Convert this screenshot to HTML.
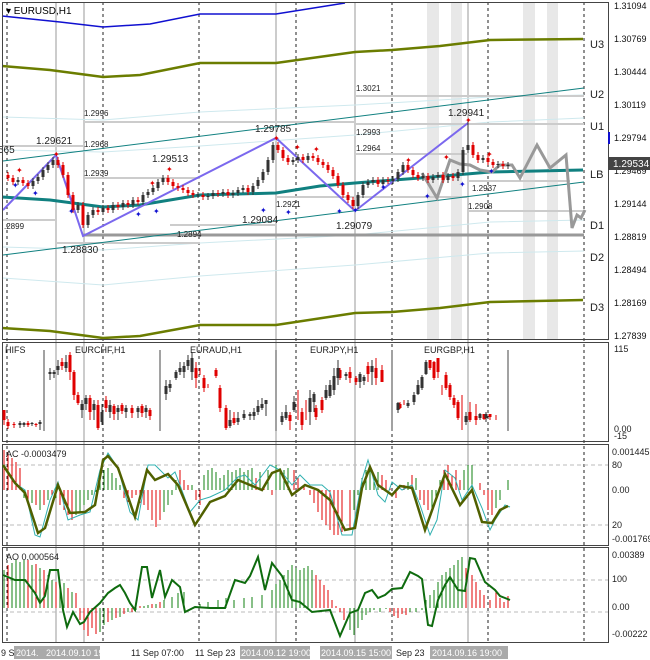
<!DOCTYPE html>
<html><head><meta charset="utf-8"><style>
html,body{margin:0;padding:0;background:#fff;width:650px;height:660px;overflow:hidden}
svg{display:block;font-family:"Liberation Sans",sans-serif}
</style></head><body>
<svg width="650" height="660" xmlns="http://www.w3.org/2000/svg">
<rect width="650" height="660" fill="#fff"/>
<g fill="#e8e8e8">
<rect x="427" y="2" width="12" height="338"/><rect x="451" y="2" width="11" height="338"/>
<rect x="523" y="2" width="12" height="338"/><rect x="547" y="2" width="11" height="338"/>
</g>
<g stroke="#999" stroke-width="1">
<line x1="56" y1="2" x2="56" y2="642"/><line x1="84" y1="2" x2="84" y2="642"/>
<line x1="276" y1="2" x2="276" y2="642"/><line x1="355" y1="2" x2="355" y2="642"/>
<line x1="468" y1="2" x2="468" y2="642"/>
</g>
<g stroke="#222" stroke-width="1" stroke-dasharray="3,3">
<line x1="7" y1="2" x2="7" y2="642"/><line x1="103" y1="2" x2="103" y2="642"/>
<line x1="199" y1="2" x2="199" y2="642"/><line x1="296" y1="2" x2="296" y2="642"/>
<line x1="392" y1="2" x2="392" y2="642"/><line x1="488" y1="2" x2="488" y2="642"/>
<line x1="584" y1="2" x2="584" y2="642"/>
</g>
<g fill="none" stroke="#cfe9ee" stroke-width="1">
<polyline points="3,117 103,120 200,112 355,105 490,97 584,95"/>
<polyline points="3,150 103,152 200,146 355,135 490,122 584,118"/>
<polyline points="3,247 103,250 200,243 355,235 490,222 584,220"/>
<polyline points="3,278 103,285 200,276 355,265 490,253 584,251"/>
</g>
<g stroke="#ccc" stroke-width="2">
<line x1="84" y1="122" x2="355" y2="122"/><line x1="2" y1="146" x2="84" y2="146"/>
<line x1="84" y1="178" x2="200" y2="178"/><line x1="2" y1="220" x2="56" y2="220"/>
<line x1="355" y1="96" x2="584" y2="96"/><line x1="355" y1="124" x2="584" y2="124"/>
<line x1="355" y1="154" x2="468" y2="154"/><line x1="276" y1="197" x2="468" y2="197"/>
<line x1="468" y1="181" x2="570" y2="181"/><line x1="468" y1="211" x2="584" y2="211"/>
<line x1="56" y1="243" x2="200" y2="243"/><line x1="170" y1="225" x2="276" y2="225"/>
</g>
<line x1="84" y1="235" x2="584" y2="235" stroke="#999" stroke-width="3"/>
<polyline fill="none" stroke="#1010d0" stroke-width="1.5" points="2,16 60,22 103,27 150,24 200,14 276,14 345,3"/>
<g fill="none" stroke="#6b7d00" stroke-width="2.5">
<polyline points="2,66 50,70 103,77 140,75 200,63 276,63 355,52 392,50 440,46 490,40 583,39"/>
<polyline points="2,328 50,331 103,338 140,336 200,325 276,325 355,313 392,312 440,308 490,302 583,300"/>
</g>
<g fill="none" stroke="#108080" stroke-width="1">
<line x1="3" y1="161" x2="584" y2="88"/><line x1="3" y1="255" x2="584" y2="182"/>
</g>
<polyline fill="none" stroke="#108080" stroke-width="3" points="2,197 50,200 103,207 140,205 200,195 276,193 320,186 355,183 420,178 490,172 583,170"/>
<polyline fill="none" stroke="#7b68ee" stroke-width="2" points="3,210 56,155 83,236 276,138 355,211 410,168 468,123"/>
<polyline fill="none" stroke="#999" stroke-width="3" points="422,173 437,198 450,160 460,164 470,165 480,170 492,172 500,165 512,165 520,178 537,145 550,168 566,155 572,228 577,215 581,218 585,210"/>
<!-- main candles: red -->
<path fill="none" stroke="#e00000" stroke-width="1" d="M8 172V181M13 175V185M23 177V186M28 180V189M58 157V168M63 162V178M68 172V198M73 192V213M83 202V228M98 207V215M108 205V213M118 202V210M128 200V208M138 197V205M168 175V185M173 179V189M178 183V191M183 185V193M188 187V196M193 190V198M203 192V200M218 190V197M228 189V198M248 185V195M278 142V153M283 147V161M288 155V165M303 154V163M313 153V161M318 155V165M323 159V168M328 162V173M333 167V179M338 173V188M343 182V198M348 192V203M353 197V209M378 177V187M388 177V184M408 162V173M413 167V178M418 172V181M428 173V183M443 172V183M453 173V181M473 142V158M478 152V163M488 155V165M493 159V168M503 161V169"/>
<path fill="none" stroke="#e00000" stroke-width="3" d="M8 175V178M13 178V182M23 180V183M28 183V186M58 160V165M63 165V175M68 175V195M73 195V210M83 205V225M98 210V212M108 208V210M118 205V207M128 203V205M138 200V202M168 178V182M173 182V186M178 186V188M183 188V190M188 190V193M193 193V195M203 195V197M218 193V194M228 192V195M248 188V192M278 145V150M283 150V158M288 158V162M303 157V160M313 156V158M318 158V162M323 162V165M328 165V170M333 170V176M338 176V185M343 185V195M348 195V200M353 200V206M378 180V184M388 180V181M408 165V170M413 170V175M418 175V178M428 176V180M443 175V180M453 176V178M473 145V155M478 155V160M488 158V162M493 162V165M503 164V166"/>
<!-- main candles: dark -->
<path fill="none" stroke="#333" stroke-width="1" d="M18 177V185M33 178V189M38 174V184M43 167V180M48 162V173M53 157V168M78 202V213M88 212V228M93 207V218M103 205V215M113 202V213M123 200V210M133 197V208M143 192V205M148 189V198M153 185V195M158 179V191M163 175V185M198 192V198M208 193V200M213 190V199M223 189V197M233 190V198M238 187V196M243 185V193M253 183V195M258 177V189M263 169V183M268 157V175M273 142V163M293 157V165M298 154V163M308 153V163M358 192V209M363 182V198M368 179V188M373 177V185M383 177V187M393 176V184M398 169V182M403 162V175M423 173V181M433 174V183M438 172V180M448 173V183M458 169V181M463 147V175M468 120V153M483 155V163M498 161V168M508 162V169"/>
<path fill="none" stroke="#333" stroke-width="3" d="M18 180V182M33 181V186M38 177V181M43 170V177M48 165V170M53 160V165M78 205V210M88 215V225M93 210V215M103 208V212M113 205V210M123 203V207M133 200V205M143 195V202M148 192V195M153 188V192M158 182V188M163 178V182M198 194.5V195.5M208 196V197M213 193V196M223 192V194M233 193V195M238 190V193M243 188V190M253 186V192M258 180V186M263 172V180M268 160V172M273 145V160M293 160V162M298 157V160M308 156V160M358 195V206M363 185V195M368 182V185M373 180V182M383 180V184M393 179V181M398 172V179M403 165V172M423 176V178M433 177V180M438 175V177M448 176V180M458 172V178M463 150V172M468 145V150M483 158V160M498 164V165M508 165V166"/>
<!-- fractal markers -->
<g fill="#e00000" font-size="8"><text x="16" y="173">✦</text><text x="53" y="157">✦</text><text x="149" y="186">✦</text><text x="166" y="172">✦</text><text x="273" y="141">✦</text><text x="294" y="150">✦</text><text x="313" y="152">✦</text><text x="405" y="163">✦</text><text x="443" y="160">✦</text><text x="465" y="123">✦</text><text x="486" y="157">✦</text></g>
<g fill="#1010d0" font-size="8"><text x="12" y="188">✦</text><text x="32" y="196">✦</text><text x="68" y="214">✦</text><text x="135" y="217">✦</text><text x="153" y="214">✦</text><text x="260" y="213">✦</text><text x="285" y="215">✦</text><text x="336" y="214">✦</text><text x="352" y="213">✦</text><text x="380" y="190">✦</text><text x="424" y="199">✦</text><text x="459" y="187">✦</text><text x="488" y="174">✦</text></g>
<g font-size="10" fill="#222">
<text x="-2" y="153">565</text><text x="36" y="144">1.29621</text>
<text x="152" y="162">1.29513</text><text x="255" y="132">1.29785</text>
<text x="448" y="116">1.29941</text><text x="62" y="253">1.28830</text>
<text x="242" y="223">1.29084</text><text x="336" y="229">1.29079</text>
</g>
<g font-size="8" fill="#222">
<text x="84" y="116">1.2996</text><text x="84" y="147">1.2968</text><text x="84" y="176">1.2939</text>
<text x="4" y="229">.2899</text><text x="356" y="91">1.3021</text><text x="356" y="135">1.2993</text>
<text x="356" y="151">1.2964</text><text x="276" y="207">1.2921</text><text x="472" y="191">1.2937</text>
<text x="468" y="209">1.2908</text><text x="177" y="237">1.2894</text>
</g>
<g font-size="11" fill="#222">
<text x="590" y="48">U3</text><text x="590" y="98">U2</text><text x="590" y="130">U1</text>
<text x="590" y="178">LB</text><text x="590" y="229">D1</text><text x="590" y="261">D2</text><text x="590" y="311">D3</text>
</g>
<text x="6" y="14" font-size="10" fill="#000">▾ EURUSD,H1</text>
<g fill="none" stroke="#444" stroke-width="1">
<rect x="2.5" y="2.5" width="606" height="337"/>
<rect x="2.5" y="342.5" width="606" height="99"/>
<rect x="2.5" y="444.5" width="606" height="101"/>
<rect x="2.5" y="547.5" width="606" height="95"/>
</g>
<g font-size="9" fill="#111">
<text x="614" y="9">1.31094</text><text x="614" y="42">1.30769</text><text x="614" y="75">1.30444</text>
<text x="614" y="108">1.30119</text><text x="614" y="141">1.29794</text><text x="614" y="174">1.29469</text>
<text x="614" y="207">1.29144</text><text x="614" y="240">1.28819</text><text x="614" y="273">1.28494</text>
<text x="614" y="306">1.28169</text><text x="614" y="339">1.27839</text>
</g>
<rect x="608" y="132" width="2" height="12" fill="#1010d0"/>
<rect x="609" y="157" width="41" height="13" fill="#444"/>
<text x="613" y="167" font-size="10" fill="#fff">1.29534</text>
<!-- subpanel 1 -->
<g font-size="9" fill="#222">
<text x="5" y="353">HIFS</text><text x="75" y="353">EURCHF,H1</text><text x="190" y="353">EURAUD,H1</text>
<text x="310" y="353">EURJPY,H1</text><text x="424" y="353">EURGBP,H1</text>
<text x="614" y="352">115</text><text x="614" y="432">0.00</text><text x="614" y="439">-15</text>
</g>
<g stroke="#444"><line x1="44" y1="350" x2="44" y2="431"/><line x1="160" y1="350" x2="160" y2="431"/><line x1="276" y1="350" x2="276" y2="431"/><line x1="392" y1="350" x2="392" y2="431"/><line x1="508" y1="350" x2="508" y2="431"/></g>
<path fill="none" stroke="#e00000" stroke-width="1" d="M4 410V425M8 419V429M14 422V428M28 421V427M36 423V427M62 358V370M70 352V380M74 370V400M78 392V405M90 395V420M98 400V430M106 396V412M114 404V420M122 403V414M132 405V418M142 404V417M150 408V420M196 362V388M200 368V375M204 375V392M208 384V388M216 368V378M220 385V412M226 405V430M234 412V425M290 412V430M298 390V420M302 408V430M306 400V420M316 405V420M322 397V413M340 368V380M350 367V383M356 376V385M368 362V382M376 358V385M382 365V382M400 402V409M404 400V405M430 360V370M434 361V380M438 358V378M442 385V395M446 372V390M450 383V400M454 395V408M458 400V420M462 395V430M470 402V422M476 404V425M484 414V420M490 414V420M496 415V420"/>
<path fill="none" stroke="#e00000" stroke-width="3" d="M4 410V420M8 422V426M14 424V425M28 423V425M36 424V425M62 362V366M70 355V372M74 372V395M78 395V403M90 398V412M98 405V428M106 400V408M114 406V414M122 405V411M132 408V413M142 406V413M150 410V416M196 368V378M204 378V388M216 370V376M220 388V408M226 408V428M234 418V423M290 415V421M302 412V425M316 408V417M322 400V410M340 370V378M350 372V378M356 378V382M368 366V374M376 368V378M382 370V382M400 404V408M430 360V368M434 362V378M438 358V372M446 375V388M450 385V397M454 398V405M458 402V418M470 412V420M476 416V420M484 414V419M490 414V417"/>
<path fill="none" stroke="#333" stroke-width="1" d="M20 421V428M24 422V427M32 422V426M40 420V430M50 368V380M54 370V378M58 360V375M66 355V372M82 400V418M86 395V410M94 400V420M102 404V425M110 400V418M118 405V420M126 405V418M138 406V418M146 405V418M166 380V400M170 380V392M176 370V380M180 362V375M184 362V378M188 355V370M192 352V380M230 410V428M238 412V425M244 410V420M250 412V420M254 408V420M258 400V415M262 398V410M266 400V416M282 412V425M286 405V420M294 396V412M310 390V425M314 392V412M326 385V400M330 380V398M334 368V395M338 360V385M346 372V380M360 372V388M364 375V385M372 360V385M398 402V413M408 400V408M414 392V405M418 380V395M422 375V390M426 360V375M466 412V425M480 413V420M486 412V422"/>
<path fill="none" stroke="#333" stroke-width="3" d="M20 423V425M24 423V425M32 423V424M40 422V424M50 372V374M54 372V374M58 366V370M66 362V368M82 404V410M86 398V404M94 404V410M102 412V422M110 405V412M118 408V412M126 408V412M138 408V412M146 408V412M166 386V394M170 384V388M176 372V378M180 368V372M184 366V372M188 360V366M192 358V372M230 420V426M238 418V422M244 414V418M250 414V416M254 412V416M258 406V412M262 404V408M266 400V404M282 416V422M286 412V418M294 402V410M310 398V412M314 394V402M326 390V398M330 385V396M334 376V390M338 368V378M346 374V376M360 374V382M364 377V381M372 366V372M398 403V410M408 403V406M414 395V402M418 385V394M422 377V388M426 362V374M466 416V422M480 414V418M486 414V418"/>
<!-- AC -->
<g stroke="#bbb" stroke-dasharray="4,3"><line x1="3" y1="465" x2="608" y2="465"/><line x1="3" y1="525" x2="608" y2="525"/><line x1="3" y1="580" x2="608" y2="580"/><line x1="3" y1="612" x2="608" y2="612"/></g>
<path fill="none" stroke="#e00000" stroke-width="1" d="M4 490V450M8 490V452M12 490V458M16 490V462M20 490V468M28 490V500M36 490V505M44 490V505M52 490V495M60 490V505M64 490V510M68 490V515M72 490V520M124 490V498M128 490V502M132 490V498M136 490V495M140 490V503M144 490V505M148 490V510M152 490V520M156 490V527M160 490V520M180 490V470M184 490V480M188 490V485M196 490V500M200 490V505M256 490V478M264 490V485M272 490V495M294 490V470M298 490V478M304 490V485M310 490V495M314 490V503M318 490V512M322 490V520M326 490V525M330 490V530M334 490V535M338 490V535M342 490V532M350 490V528M382 490V475M386 490V480M390 490V488M396 490V498M404 490V485M412 490V475M420 490V500M424 490V505M428 490V510M444 490V470M448 490V465M452 490V475M456 490V470M460 490V480M480 490V483M484 490V495M488 490V510M492 490V515"/>
<path fill="none" stroke="#108010" stroke-width="1" d="M24 490V498M32 490V503M40 490V510M48 490V500M56 490V498M76 490V515M80 490V512M84 490V505M88 490V500M92 490V495M96 490V492M100 490V480M104 490V470M108 490V468M112 490V473M116 490V478M120 490V485M164 490V512M168 490V505M172 490V495M176 490V480M192 490V485M204 490V475M208 490V470M212 490V468M216 490V472M220 490V478M224 490V475M228 490V470M232 490V472M236 490V470M240 490V468M244 490V472M248 490V470M252 490V468M260 490V472M268 490V470M276 490V465M280 490V468M284 490V470M288 490V468M354 490V510M358 490V495M362 490V478M366 490V470M370 490V468M374 490V474M378 490V472M400 490V490M408 490V482M416 490V478M432 490V510M436 490V498M440 490V480M464 490V470M468 490V465M472 490V465M496 490V508M500 490V500M504 490V490M508 490V480"/>
<polyline fill="none" stroke="#30b0b0" stroke-width="1" points="3,465 15,483 25,490 35,535 40,537 50,500 58,482 68,520 80,515 90,512 100,470 108,453 118,468 130,512 138,520 148,465 155,465 168,478 175,472 190,512 200,500 210,497 225,490 238,477 245,475 255,485 270,465 280,470 292,485 300,475 310,485 322,485 330,492 342,535 352,535 362,480 368,460 378,495 385,502 392,482 402,490 412,485 420,505 430,535 437,520 445,470 455,478 462,500 472,485 482,508 490,530 495,520 505,505 510,507"/>
<polyline fill="none" stroke="#506000" stroke-width="2.5" points="3,465 15,483 25,493 38,533 45,528 58,485 70,513 85,512 95,505 103,460 108,456 118,468 135,517 147,470 155,480 168,474 178,485 195,525 210,502 225,496 238,480 250,485 262,490 272,473 280,470 292,495 305,485 318,490 330,500 345,530 355,528 362,488 370,467 378,485 392,495 400,486 412,488 425,530 435,502 445,474 460,505 472,490 482,522 492,523 500,510 508,506"/>
<g font-size="9" fill="#222">
<text x="6" y="457">AC -0.0003479</text>
<text x="612" y="455">0.001445</text><text x="612" y="468">80</text><text x="612" y="493">0.00</text>
<text x="612" y="528">20</text><text x="612" y="542">-0.001769</text>
<text x="6" y="560">AO 0.000564</text>
<text x="612" y="558">0.00389</text><text x="612" y="582">100</text><text x="612" y="610">0.00</text>
<text x="612" y="637">-0.00222</text>
</g>
<!-- AO hist -->
<path fill="none" stroke="#108010" stroke-width="1" d="M4 608V570M12 608V563M16 608V560M20 608V562M24 608V560M32 608V565M40 608V568M48 608V575M52 608V580M60 608V585M64 608V583M72 608V592M100 608V632M104 608V625M112 608V620M120 608V617M128 608V612M136 608V610M144 608V606M148 608V605M156 608V604M164 608V600M172 608V597M178 608V593M184 608V592M200 608V604M208 608V602M218 608V600M226 608V598M234 608V600M244 608V598M252 608V597M262 608V595M272 608V590M276 608V584M280 608V580M284 608V575M288 608V570M292 608V565M296 608V568M300 608V570M304 608V568M308 608V566M312 608V570M350 608V630M354 608V635M358 608V628M362 608V620M366 608V615M370 608V612M374 608V610M380 608V612M386 608V609M410 608V612M416 608V612M422 608V610M426 608V600M430 608V595M434 608V590M438 608V582M442 608V575M446 608V572M450 608V568M454 608V565M458 608V560M462 608V557"/>
<path fill="none" stroke="#e00000" stroke-width="1" d="M8 608V565M28 608V560M36 608V564M44 608V570M56 608V582M68 608V588M76 608V593M80 608V620M84 608V630M88 608V636M92 608V628M96 608V634M108 608V622M116 608V618M124 608V614M132 608V612M140 608V606M152 608V604M160 608V602M316 608V575M320 608V580M324 608V585M328 608V590M332 608V600M336 608V606M340 608V612M344 608V620M390 608V612M394 608V616M398 608V618M402 608V614M406 608V615M466 608V568M472 608V575M476 608V582M480 608V590M484 608V595M490 608V600M496 608V590M500 608V598M504 608V602M508 608V596"/>
<polyline fill="none" stroke="#0e6b0e" stroke-width="2" points="3,575 15,580 25,580 35,593 40,603 45,596 50,570 58,570 63,610 67,627 73,612 80,624 84,622 90,612 100,603 108,593 115,588 120,585 125,593 130,603 135,610 142,567 147,567 152,598 160,570 165,597 172,580 180,587 185,612 195,607 210,608 225,608 235,580 245,583 250,576 258,557 265,590 272,563 282,576 292,600 300,602 312,612 330,610 340,636 350,613 358,610 365,593 372,590 378,598 385,595 392,589 402,588 410,572 418,576 422,579 428,625 432,626 438,600 445,585 450,577 458,590 465,591 470,558 475,559 485,582 495,590 500,596 505,598 510,600"/>
<g font-size="9">
<rect x="14" y="646" width="86" height="13" fill="#aaa"/><rect x="240" y="646" width="70" height="13" fill="#aaa"/>
<rect x="320" y="646" width="72" height="13" fill="#aaa"/><rect x="430" y="646" width="78" height="13" fill="#aaa"/>
<text x="1" y="656" fill="#222">9 S</text><text x="16" y="656" fill="#fff">2014.</text><text x="46" y="656" fill="#fff">2014.09.10 19:00</text>
<text x="131" y="656" fill="#222">11 Sep 07:00</text><text x="195" y="656" fill="#222">11 Sep 23</text>
<text x="241" y="656" fill="#fff">2014.09.12 19:00</text><text x="321" y="656" fill="#fff">2014.09.15 15:00</text>
<text x="396" y="656" fill="#222">Sep 23</text><text x="432" y="656" fill="#fff">2014.09.16 19:00</text>
</g>
</svg>
</body></html>
